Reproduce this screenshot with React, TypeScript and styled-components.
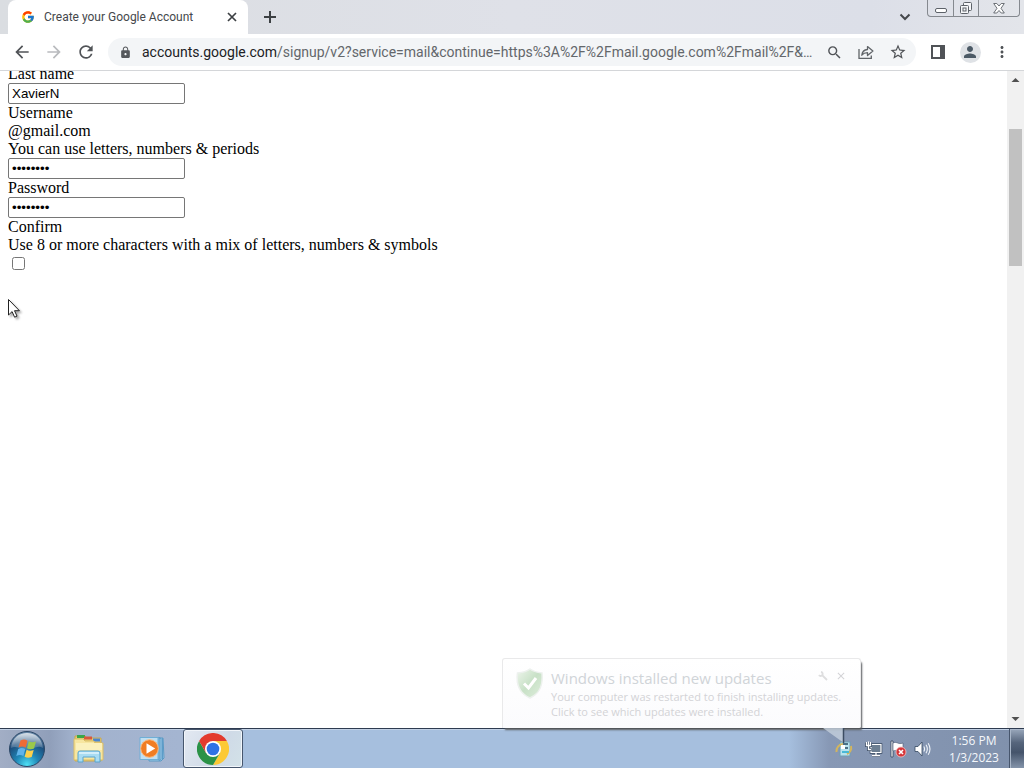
import React from "react";
import styled, { createGlobalStyle } from "styled-components";
import {
  MdAdd,
  MdArrowBack,
  MdArrowForward,
  MdClose,
  MdLock,
  MdMoreVert,
  MdPerson,
  MdRefresh,
  MdSearch,
  MdStarBorder,
} from "react-icons/md";
import { FcGoogle } from "react-icons/fc";

const UI_FONT = '"Open Sans", "Noto Sans", sans-serif';
const CHROME_FONT = 'Roboto, "Open Sans", sans-serif';

const GlobalStyle = createGlobalStyle`
  * { box-sizing: border-box; }
  body { margin: 0; overflow: hidden; }
  button { margin: 0; padding: 0; border: 0; background: none; font: inherit; color: inherit; }
  svg { display: block; flex: none; }
`;

const Desktop = styled.div`
  display: flex;
  flex-direction: column;
  height: 100vh;
  background: #fff;
  font-family: ${UI_FONT};
`;

/* ---------- Browser frame ---------- */

const TabStrip = styled.header`
  display: flex;
  align-items: flex-start;
  height: 34px;
  padding: 0 4px 0 8px;
  background: linear-gradient(90deg, #dadde1 0%, #dfe1e8 50%, #dcdfe8 85%, #e3e5ea 100%);
  font-family: ${CHROME_FONT};
`;

const Tab = styled.div`
  display: flex;
  align-items: center;
  width: 240px;
  height: 34px;
  padding: 0 8px 0 13px;
  gap: 9px;
  background: #fff;
  border-radius: 8px 8px 0 0;
  color: #45484c;
`;

const TabTitle = styled.span`
  flex: 1;
  font-size: 12px;
  line-height: 16px;
  white-space: nowrap;
`;

const IconButton = styled.button<{ $size: number; $color?: string }>`
  display: flex;
  align-items: center;
  justify-content: center;
  flex: none;
  width: ${(p) => p.$size}px;
  height: ${(p) => p.$size}px;
  color: ${(p) => p.$color ?? "#505357"};
`;

const NewTab = styled(IconButton)`
  margin: 5px 0 0 10px;
`;

const TabSearch = styled(IconButton)`
  margin: 5px 10px 0 auto;
`;

const WindowControls = styled.div`
  display: flex;
  height: 17px;
  border: 1px solid #85898f;
  border-top: 0;
  border-radius: 0 0 4px 4px;
`;

const WindowButton = styled.button<{ $wide?: boolean }>`
  display: flex;
  align-items: center;
  justify-content: center;
  width: ${(p) => (p.$wide ? 41 : 25)}px;
  & + & {
    border-left: 1px solid #85898f;
  }
`;

const Toolbar = styled.nav`
  display: flex;
  align-items: center;
  height: 37px;
  padding: 0 6px;
  border-bottom: 1px solid #d4d6d9;
  background: #fff;
  font-family: ${CHROME_FONT};
`;

const Omnibox = styled.div`
  display: flex;
  align-items: center;
  flex: 1;
  min-width: 0;
  height: 28px;
  margin: 0 6px;
  padding: 0 2px 0 11px;
  border-radius: 14px;
  background: #f3f5f7;
`;

const Address = styled.div`
  flex: 1;
  min-width: 0;
  margin: 0 4px 0 10px;
  overflow: hidden;
  color: #63676b;
  font-size: 14px;
  line-height: 20px;
  white-space: nowrap;
  text-overflow: ellipsis;
`;

const Host = styled.span`
  color: #202124;
`;

const Avatar = styled.span`
  display: flex;
  align-items: center;
  justify-content: center;
  width: 21px;
  height: 21px;
  border-radius: 50%;
  background: #dfe2e6;
`;

/* ---------- Page ---------- */

const Viewport = styled.main`
  position: relative;
  display: flex;
  flex: 1;
  min-height: 0;
`;

const PageBody = styled.form`
  flex: 1;
  min-width: 0;
  overflow: hidden;
  padding: 0 8px;
  color: #000;
  font-family: "Liberation Serif", serif;
  font-size: 16px;
  line-height: 18px;
`;

/* The page is scrolled down, so its first field sits above the visible area. */
const Scrolled = styled.div`
  display: flex;
  flex-direction: column;
  align-items: flex-start;
  margin-top: -27px;
`;

const Field = styled.input`
  width: 177px;
  height: 21px;
  padding: 1px 3px;
  border: 1px solid #767676;
  border-radius: 2px;
  background: #fff;
  color: #000;
  font-family: "Liberation Sans", sans-serif;
`;

const Check = styled.input`
  width: 13px;
  height: 13px;
  margin: 3px 3px 3px 4px;
`;

const ScrollBar = styled.div`
  display: flex;
  flex-direction: column;
  align-items: center;
  justify-content: space-between;
  width: 17px;
  background: #f1f1f1;
`;

const ScrollTrack = styled.div`
  flex: 1;
  padding-top: 41px;
`;

const ScrollThumb = styled.div`
  width: 13px;
  height: 137px;
  background: #c1c1c1;
`;

const Pointer = styled.svg`
  position: absolute;
  left: 7px;
  top: 227px;
  filter: drop-shadow(2px 2px 1px rgba(0, 0, 0, 0.35));
`;

/* ---------- Notification ---------- */

const Balloon = styled.aside`
  position: absolute;
  right: 163px;
  bottom: 0;
  z-index: 2;
  display: flex;
  width: 359px;
  height: 70px;
  padding: 9px 11px 0 13px;
  gap: 7px;
  border: 1px solid #e9e9ea;
  border-bottom: 0;
  border-radius: 3px 3px 2px 0;
  background: linear-gradient(#fff, #fbfbfd);
  box-shadow: 2px 3px 2px -1px #55585c;
  color: #d3d3d6;
`;

const BalloonText = styled.div`
  flex: 1;
  min-width: 0;
  font-size: 11px;
  line-height: 15px;
  white-space: nowrap;
`;

const BalloonHead = styled.div`
  display: flex;
  align-items: flex-start;
  justify-content: space-between;
`;

const BalloonTitle = styled.h2`
  margin: 0;
  color: #d0d4d8;
  font-size: 15px;
  font-weight: 400;
  line-height: 21px;
`;

const BalloonActions = styled.div`
  display: flex;
  gap: 2px;
`;

const BalloonTail = styled.svg`
  position: absolute;
  right: 15px;
  top: 69px;
`;

/* ---------- Taskbar ---------- */

const Taskbar = styled.footer`
  display: flex;
  align-items: stretch;
  height: 40px;
  border-top: 1px solid #2e3b50;
  box-shadow: inset 0 1px 0 #c2d1e5;
  background: linear-gradient(
    90deg,
    #a2aec5 0,
    #909fba 50px,
    #a2b2cd 75px,
    #a4b5d1 180px,
    #a6bfde 245px,
    #a6bfde calc(100% - 235px),
    #8798b5 calc(100% - 195px),
    #8091ac 100%
  );
`;

const TaskButton = styled.button<{ $width: number; $active?: boolean }>`
  display: flex;
  align-items: center;
  justify-content: center;
  width: ${(p) => p.$width}px;
  border: ${(p) => (p.$active ? "1px solid #46566d" : "0")};
  border-radius: 3px;
  background: ${(p) => (p.$active ? "linear-gradient(120deg, #e3e9f2, #cfdae7 60%, #d3e2e8)" : "none")};
  box-shadow: ${(p) => (p.$active ? "inset 0 0 0 1px #f1f5fa" : "none")};
`;

const Tray = styled.div`
  display: flex;
  align-items: center;
  margin-left: auto;
  gap: 6px;
`;

const TrayButton = styled.button`
  display: flex;
  align-items: center;
  justify-content: center;
  width: 18px;
  height: 20px;
`;

const TrayFirst = styled(TrayButton)`
  margin-right: 6px;
`;

const Clock = styled.time`
  width: 58px;
  margin-left: 8px;
  color: #f4f7fb;
  font-size: 12px;
  line-height: 17px;
  text-align: center;
  white-space: nowrap;
`;

const ShowDesktop = styled.button`
  align-self: stretch;
  width: 15px;
  border: 1px solid #46556c;
  border-width: 0 0 0 1px;
  background: linear-gradient(#9aa8bc 0, #56657c 35%, #45546b 60%, #8494aa 100%);
  box-shadow: inset 1px 1px 0 #a9b6c8;
`;

const ShareIcon = () => (
  <svg width="16" height="16" viewBox="0 0 16 16" fill="none" stroke="#606468" strokeWidth="1.3">
    <path d="M1 5v9.3h12.300V11.500" />
    <path d="M3.800 11.200c.4-3.800 2.500-5.500 5.700-5.700V2.600l5.400 4.500-5.400 4.400V8.700c-2.600 0-4.300.7-5.700 2.500z" strokeLinejoin="round" />
  </svg>
);

const ShieldIcon = () => (
  <svg width="28" height="33" viewBox="0 0 28 33">
    <defs>
      <linearGradient id="shield" x1="0" y1="0" x2="1" y2="1">
        <stop offset="0" stopColor="#eef5ec" />
        <stop offset="0.500" stopColor="#c8e1c7" />
        <stop offset="1" stopColor="#dfeedc" />
      </linearGradient>
    </defs>
    <path d="M14 1c4 3 8 3.500 12 4 1 11-1 20-12 25C3 25 0 16 1.500 5 6 4.500 10 4 14 1z" fill="url(#shield)" stroke="#edf1ee" strokeWidth="1.500" />
    <path d="M8 15.500l4.500 4.500L20 10" fill="none" stroke="#fff" strokeWidth="3" />
  </svg>
);

const StartOrb = () => (
  <svg width="38" height="38" viewBox="0 0 38 38">
    <defs>
      <radialGradient id="orb" cx="0.5" cy="0.95" r="0.95">
        <stop offset="0" stopColor="#4fe0f5" />
        <stop offset="0.350" stopColor="#1f86b6" />
        <stop offset="0.700" stopColor="#1d4d7c" />
        <stop offset="1" stopColor="#6f8fae" />
      </radialGradient>
      <linearGradient id="gloss" x1="0" y1="0" x2="0" y2="1">
        <stop offset="0" stopColor="#fff" stopOpacity="0.75" />
        <stop offset="1" stopColor="#fff" stopOpacity="0.1" />
      </linearGradient>
    </defs>
    <circle cx="19" cy="19" r="17.500" fill="url(#orb)" stroke="#2c4766" strokeWidth="1" />
    <path d="M3 18C4 8 11 3 19 3s15 5 16 15c-6-4-10 2-16 2S9 15 3 18z" fill="url(#gloss)" />
    <path d="M12.500 10.500c3-1.500 5-1 7 .2l-1.800 7c-2.300-1.300-4.400-1.500-7.200-.2z" fill="#ee6b35" />
    <path d="M20.800 11.300c2.300 1.200 4.500 1.300 7.200.2l-2 7c-2.600 1.200-4.800.9-7-.2z" fill="#9bc94a" />
    <path d="M10.200 18.900c2.700-1.300 4.800-1.100 7.100.2l-1.900 7c-2.200-1.200-4.300-1.400-7.100-.2z" fill="#5fb3ea" />
    <path d="M18.600 19.700c2.300 1.200 4.400 1.400 7.100.2l-2 7c-2.700 1.200-4.800 1-7.100-.2z" fill="#fbd04c" />
  </svg>
);

const ExplorerIcon = () => (
  <svg width="34" height="30" viewBox="0 0 34 30">
    <path d="M3 2h10l2 2h14v23H3z" fill="#e8cc72" stroke="#c9a94e" />
    <path d="M5 1h8v3H5z" fill="#3aa648" />
    <path d="M12 2.500h8v3h-8z" fill="#d8583c" />
    <path d="M21 4.500h7v3h-7z" fill="#4b86d0" />
    <path d="M2 5h9l2 2h9l1 2h8v17H2z" fill="#f7e6a0" stroke="#d9bd66" />
    <path d="M4 9h26v7H4z" fill="#fbf1bd" />
    <path d="M6 28V19q0-2 2-2h18q2 0 2 2v9h-5v-5H11v5z" fill="#a8dcf2" stroke="#58a5cf" />
    <path d="M7 19h20" stroke="#e0f5fd" strokeWidth="1.500" />
  </svg>
);

const MediaIcon = () => (
  <svg width="32" height="28" viewBox="0 0 32 28">
    <path d="M11 3h14l1 20-3 3H11z" fill="#9fcbe8" stroke="#5b9ac4" />
    <path d="M6 2.500h15v22H6z" fill="#cfe7f6" stroke="#6aa9d0" />
    <path d="M21 2.500l2 1v21l-2 1zM24.500 3v21" fill="none" stroke="#5c9cc8" />
    <path d="M2 2.500h18v22H2z" fill="#bfdff2" stroke="#70afd6" />
    <circle cx="11.500" cy="13.500" r="8.800" fill="#f07d23" stroke="#fbb77b" />
    <path d="M8.500 8.200v10.600l8.700-5.300z" fill="#fff" />
  </svg>
);

const ChromeIcon = () => (
  <svg width="32" height="32" viewBox="0 0 48 48">
    <path d="M24 12H44.800A24 24 0 0 1 24 48L34.400 30z" fill="#fcc934" />
    <path d="M34.400 30L24 48A24 24 0 0 1 3.200 12L13.600 30z" fill="#2b9247" />
    <path d="M13.600 30L3.200 12A24 24 0 0 1 44.800 12H24z" fill="#e33b2e" />
    <circle cx="24" cy="24" r="12" fill="#fff" />
    <circle cx="24" cy="24" r="9.500" fill="#2f72e4" />
  </svg>
);

const UpdateIcon = () => (
  <svg width="18" height="18" viewBox="0 0 18 18">
    <rect x="5" y="2" width="10" height="14" fill="#b9e3ee" stroke="#6f9fb5" />
    <path d="M1.500 12A7 7 0 0 1 8 4M16 6a7 7 0 0 1-4 8" fill="none" stroke="#d3b55e" strokeWidth="2" />
    <path d="M6 5h4v4H6z" fill="#fff" />
    <path d="M8 3h5v2H8zM10 7h3v2h-3z" fill="#4c6f86" />
    <path d="M7 11h7v2H7z" fill="#4ab9d5" />
  </svg>
);

const NetworkIcon = () => (
  <svg width="18" height="18" viewBox="0 0 18 18" fill="none">
    <path d="M6 4.500h10v8H6zM11 13v2M7 15.500h8" stroke="#3a4b62" strokeWidth="2.600" />
    <path d="M6 4.500h10v8H6z" fill="#6d7f92" stroke="#fff" strokeWidth="1.200" />
    <path d="M11 13v2M7 15.500h8" stroke="#fff" strokeWidth="1.300" />
    <path d="M1.500 2.500v3h4v-3M3.500 2v7.500h3" stroke="#3a4b62" strokeWidth="2.800" />
    <path d="M1.500 2v3.500h4V2M3.500 1.500v8H6" stroke="#fff" strokeWidth="1.300" />
  </svg>
);

const FlagIcon = () => (
  <svg width="18" height="18" viewBox="0 0 18 18">
    <path d="M2 1h2v16H2z" fill="#fff" stroke="#30425a" strokeWidth="0.800" />
    <path d="M4 3c4-2 5 2 10 0v8c-5 2-6-2-10 0z" fill="#fff" stroke="#44566e" strokeWidth="0.600" />
    <circle cx="12" cy="12" r="5" fill="#d6363a" stroke="#f5c4c4" strokeWidth="0.800" />
    <path d="M10 10l4 4M14 10l-4 4" stroke="#fff" strokeWidth="1.600" />
  </svg>
);

const SpeakerIcon = () => (
  <svg width="18" height="18" viewBox="0 0 18 18" fill="none">
    <path d="M2 6.500h3L9 2v14l-4-4.500H2z" fill="#fff" stroke="#34475f" strokeWidth="0.800" />
    <path d="M10.800 6.500q1.600 2.500 0 5M13 4.800q2.700 4.200 0 8.400M15.200 3.200q3.600 5.800 0 11.600" stroke="#eef3f9" strokeWidth="1.100" />
  </svg>
);

export default function App() {
  return (
    <Desktop>
      <GlobalStyle />
      <TabStrip>
        <Tab>
          <FcGoogle size={14} />
          <TabTitle>Create your Google Account</TabTitle>
          <IconButton $size={16} $color="#3c4043" aria-label="Close tab">
            <svg width="10" height="10" viewBox="0 0 10 10" stroke="currentColor" strokeWidth="1.700">
              <path d="M1 1l8 8M9 1L1 9" />
            </svg>
          </IconButton>
        </Tab>
        <NewTab $size={24} $color="#3c4043" aria-label="New tab">
          <svg width="12" height="12" viewBox="0 0 12 12" stroke="currentColor" strokeWidth="2">
            <path d="M6 0v12M0 6h12" />
          </svg>
        </NewTab>
        <TabSearch $size={24} aria-label="Search tabs">
          <svg width="12" height="8" viewBox="0 0 12 8" fill="none" stroke="#45484c" strokeWidth="2">
            <path d="M1.500 1.500L6 6l4.500-4.500" />
          </svg>
        </TabSearch>
        <WindowControls>
          <WindowButton aria-label="Minimize">
            <svg width="12" height="16" viewBox="0 0 12 16">
              <rect x="0.500" y="8.500" width="11" height="4" rx="1.500" fill="#fff" stroke="#5d6269" />
            </svg>
          </WindowButton>
          <WindowButton aria-label="Restore">
            <svg width="14" height="16" viewBox="0 0 14 16" fill="#f6f7f9" stroke="#5d6269">
              <rect x="4.500" y="2.500" width="8" height="8" rx="1" />
              <rect x="1.500" y="5.500" width="8" height="8" rx="1" />
              <rect x="4" y="8" width="3" height="3" />
            </svg>
          </WindowButton>
          <WindowButton $wide aria-label="Close">
            <svg width="12" height="16" viewBox="0 0 12 16">
              <path
                d="M.7 3.500h3.100L6 6l2.200-2.500h3.100L8 8.300l3.300 4.700H8.200L6 10.500 3.800 13H.7L4 8.300z"
                fill="#fff"
                stroke="#5d6269"
                strokeWidth="0.900"
              />
            </svg>
          </WindowButton>
        </WindowControls>
      </TabStrip>

      <Toolbar>
        <IconButton $size={32} aria-label="Back">
          <MdArrowBack size={20} />
        </IconButton>
        <IconButton $size={32} $color="#b9bbbe" aria-label="Forward">
          <MdArrowForward size={20} />
        </IconButton>
        <IconButton $size={32} aria-label="Reload">
          <MdRefresh size={20} />
        </IconButton>
        <Omnibox>
          <MdLock size={13} color="#55585c" />
          <Address role="textbox" aria-label="Address" tabIndex={0}>
            <Host>accounts.google.com</Host>
            /signup/v2?service=mail&amp;continue=https%3A%2F%2Fmail.google.com%2Fmail%2F&amp;...
          </Address>
          <IconButton $size={32} aria-label="Zoom">
            <MdSearch size={17} />
          </IconButton>
          <IconButton $size={32} aria-label="Share">
            <ShareIcon />
          </IconButton>
          <IconButton $size={32} aria-label="Bookmark">
            <MdStarBorder size={18} />
          </IconButton>
        </Omnibox>
        <IconButton $size={32} aria-label="Side panel">
          <svg width="14" height="14" viewBox="0 0 14 14">
            <path d="M1 1h12v12H1z" fill="none" stroke="#505357" strokeWidth="2" />
            <path d="M9 1h4v12H9z" fill="#505357" />
          </svg>
        </IconButton>
        <IconButton $size={32} $color="#4c5a66" aria-label="Profile">
          <Avatar>
            <MdPerson size={18} />
          </Avatar>
        </IconButton>
        <IconButton $size={32} aria-label="Menu">
          <MdMoreVert size={18} />
        </IconButton>
      </Toolbar>

      <Viewport>
        <PageBody>
          <Scrolled>
            <Field id="last" type="text" />
            <label htmlFor="last">Last name</label>
            <Field id="user" type="text" defaultValue="XavierN" />
            <label htmlFor="user">Username</label>
            <span>@gmail.com</span>
            <span>You can use letters, numbers &amp; periods</span>
            <Field id="password" type="password" defaultValue="12345678" />
            <label htmlFor="password">Password</label>
            <Field id="confirm" type="password" defaultValue="12345678" />
            <label htmlFor="confirm">Confirm</label>
            <span>Use 8 or more characters with a mix of letters, numbers &amp; symbols</span>
            <Check type="checkbox" aria-label="Show password" />
          </Scrolled>
        </PageBody>
        <ScrollBar>
          <svg width="17" height="17" viewBox="0 0 17 17">
            <path d="M4.500 11L8.500 7l4 4z" fill="#505050" />
          </svg>
          <ScrollTrack>
            <ScrollThumb />
          </ScrollTrack>
          <svg width="17" height="17" viewBox="0 0 17 17">
            <path d="M4.500 6L8.500 10l4-4z" fill="#505050" />
          </svg>
        </ScrollBar>
        <Pointer width="14" height="21" viewBox="0 0 14 21">
          <path d="M1.500 1.500v15.500l3.600-3.400 2.500 5.600 2.400-1.100-2.500-5.400h4.900z" fill="#fff" stroke="#222" />
        </Pointer>
        <Balloon>
          <ShieldIcon />
          <BalloonText>
            <BalloonHead>
              <BalloonTitle>Windows installed new updates</BalloonTitle>
              <BalloonActions>
                <IconButton $size={16} $color="#dededf" aria-label="Options">
                  <svg width="10" height="10" viewBox="0 0 10 10" fill="none" stroke="currentColor" strokeWidth="1.800">
                    <path d="M1 4a2 2 0 1 0 2-3M4 4l5 5" />
                  </svg>
                </IconButton>
                <IconButton $size={16} $color="#d3d3d6" aria-label="Dismiss">
                  <MdClose size={12} />
                </IconButton>
              </BalloonActions>
            </BalloonHead>
            <div>Your computer was restarted to finish installing updates.</div>
            <div>Click to see which updates were installed.</div>
          </BalloonText>
          <BalloonTail width="22" height="16" viewBox="0 0 22 16">
            <path d="M0 0h21v15z" fill="#c4cfdd" fillOpacity="0.8" />
            <path d="M20.500 0v15" stroke="#3c4c63" strokeWidth="1.500" />
          </BalloonTail>
        </Balloon>
      </Viewport>

      <Taskbar>
        <TaskButton $width={54} aria-label="Start">
          <StartOrb />
        </TaskButton>
        <TaskButton $width={70} aria-label="File Explorer">
          <ExplorerIcon />
        </TaskButton>
        <TaskButton $width={59} aria-label="Media Player">
          <MediaIcon />
        </TaskButton>
        <TaskButton $width={60} $active aria-label="Chrome">
          <ChromeIcon />
        </TaskButton>
        <Tray>
          <TrayFirst aria-label="Updates">
            <UpdateIcon />
          </TrayFirst>
          <TrayButton aria-label="Network">
            <NetworkIcon />
          </TrayButton>
          <TrayButton aria-label="Action center">
            <FlagIcon />
          </TrayButton>
          <TrayButton aria-label="Volume">
            <SpeakerIcon />
          </TrayButton>
          <Clock>
            1:56 PM
            <br />
            1/3/2023
          </Clock>
          <ShowDesktop aria-label="Show desktop" />
        </Tray>
      </Taskbar>
    </Desktop>
  );
}
